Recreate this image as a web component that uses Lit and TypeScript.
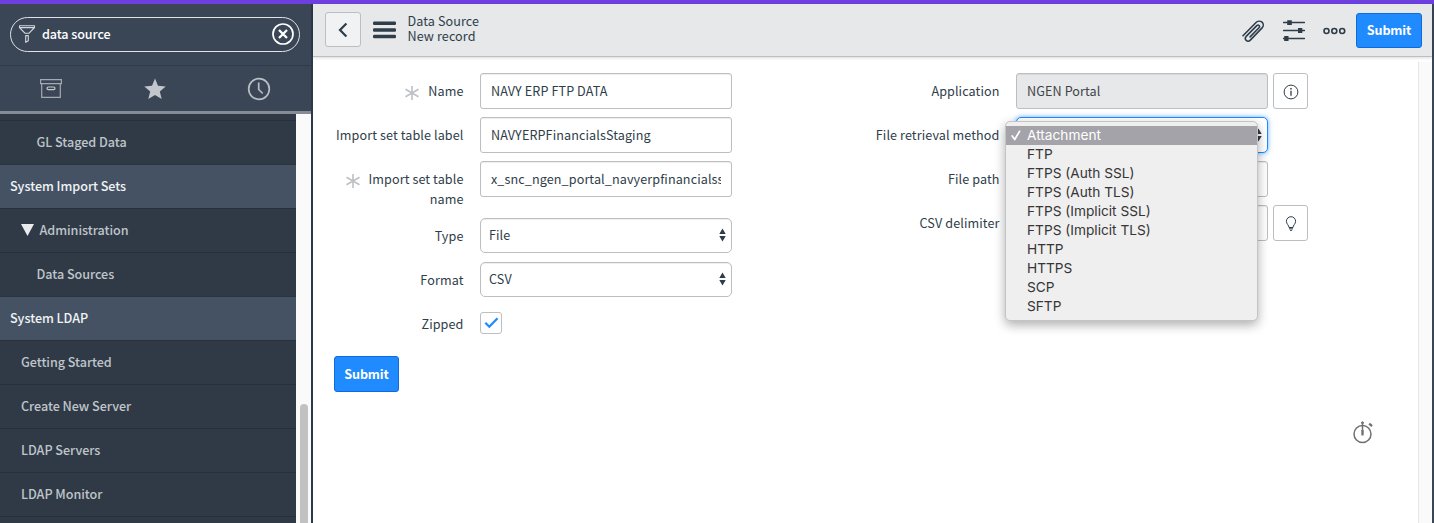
import { LitElement, html, css, svg, nothing } from "lit";
import { customElement, property } from "lit/decorators.js";
import { classMap } from "lit/directives/class-map.js";

const icons = {
  funnel: svg`<svg width="18" height="20" viewBox="0 0 18 20" fill="none" stroke="#d3d7dc" stroke-width="1.1" stroke-linejoin="round"><path d="M1.5 1.7h15v1.8l-5.6 5.8H7.1L1.5 3.5zM1.5 3.6h15M7.7 11.6h2.6v5.2L7.7 18.3z"/></svg>`,
  clear: svg`<svg width="24" height="24" viewBox="0 0 24 24" fill="none" stroke="#fff"><circle cx="12" cy="12" r="10" stroke-width="1.7"/><path d="M8 8l8 8M16 8l-8 8" stroke-width="2.3"/></svg>`,
  archive: svg`<svg width="22" height="19" viewBox="0 0 22 19" fill="none" stroke="#a3a9b2" stroke-width="1.2"><path d="M.6.7h20.8v4H.6zM1.7 4.7h18.6v13.6H1.7z"/><rect x="7" y="8" width="8" height="2.6" rx="1.3" stroke="#c5c9ce"/></svg>`,
  star: svg`<svg width="22" height="22" viewBox="0 0 22 22" fill="#c3c6cc"><path d="M11 .6l3 7.2 7.7.6-5.9 5 1.9 7.6L11 16.9 4.3 21l1.9-7.6-5.9-5 7.7-.6z"/></svg>`,
  clock: svg`<svg width="24" height="24" viewBox="0 0 24 24" fill="none" stroke="#b9bdc4" stroke-width="1.7"><circle cx="12" cy="12" r="10.3"/><path d="M11.7 5.5v7l4 4"/></svg>`,
  back: svg`<svg width="10" height="16" viewBox="0 0 10 16" fill="none" stroke="#2e3d49" stroke-width="2.2"><path d="M8.4 1.5L2 8l6.4 6.5"/></svg>`,
  menu: svg`<svg width="23" height="18" viewBox="0 0 23 18" fill="#2e3d49"><rect y=".5" width="23" height="3.5" rx="1.2"/><rect y="7.2" width="23" height="3.5" rx="1.2"/><rect y="13.7" width="23" height="3.5" rx="1.2"/></svg>`,
  clip: svg`<svg width="24" height="24" viewBox="0 0 24 24" fill="none" stroke="#2e3d49" stroke-width="1.6" stroke-linecap="round" stroke-linejoin="round"><path d="M2 16.8L14.8 3.7c1.8-1.8 4.5-1.9 6.2-.5 1.7 1.5 1.6 4 .1 5.7L9.3 21.1c-1.2 1.2-3 1.3-4.1.3-1.2-1.1-1.1-2.7 0-4L15.8 6.6c.7-.7 1.7-.7 2.3-.1.6.6.6 1.5-.1 2.3l-8.9 9.1"/></svg>`,
  sliders: svg`<svg width="22" height="22" viewBox="0 0 22 22" stroke="#2e3d49" fill="#2e3d49"><path d="M.5 2.5h21M.5 10.5h21M.5 18.5h21" stroke-width="1.5" stroke-linecap="round"/><path d="M4.2.2h4.6v4.8H4.2zM15 8.1h4.3v4.8H15zM1.2 16.1h4.3v4.8H1.2z" stroke="none"/></svg>`,
  dots: svg`<svg width="23" height="8" viewBox="0 0 23 8" fill="none" stroke="#2e3d49" stroke-width="1.6"><circle cx="3.5" cy="4" r="2.5"/><circle cx="11.3" cy="4" r="2.5"/><circle cx="19.2" cy="4" r="2.5"/></svg>`,
  required: svg`<svg width="16" height="16" viewBox="0 0 16 16" stroke="#bdc0c4" stroke-width="1.6"><path d="M8 1v14M1.5 4.2l13 7.6M1.5 11.8l13-7.6"/></svg>`,
  info: svg`<svg width="16" height="16" viewBox="0 0 16 16" fill="none" stroke="#2e3d49"><circle cx="8" cy="8" r="6.9" stroke-width="1"/><path d="M8 6.7v5" stroke-width="1.3"/><path d="M8 3.9v1.5" stroke-width="1.5"/></svg>`,
  bulb: svg`<svg width="12" height="16" viewBox="0 0 12 16" fill="none" stroke="#2e3d49" stroke-width="1"><path d="M4 11.5C4 9.3 1.4 8 1.4 5.3a4.6 4.6 0 0 1 9.2 0C10.6 8 8 9.3 8 11.5zM4 12.8h4M4.900 14.3h2.2"/></svg>`,
  spin: svg`<svg width="7" height="14" viewBox="0 0 7 14" fill="#2e3d49"><path d="M3.5.5L6.7 6H.3zM.3 8h6.4L3.5 13.5z"/></svg>`,
  check: svg`<svg width="15" height="12" viewBox="0 0 15 12" fill="none" stroke="#1f8bff" stroke-width="2.3"><path d="M1.3 5.8l4 3.9L13.5 1.2"/></svg>`,
  tick: svg`<svg width="10" height="11" viewBox="0 0 10 11" fill="none" stroke="#fff" stroke-width="1.7" stroke-linecap="round" stroke-linejoin="round"><path d="M1.2 6l2.5 3.5L8.6 1.3"/></svg>`,
  stopwatch: svg`<svg width="20" height="23" viewBox="0 0 20 23" fill="none" stroke="#707070" stroke-width="1.5"><circle cx="9.5" cy="13" r="8.5"/><path d="M9.5 2.5V13"/><path d="M9.5 9v5.5" stroke-width="2.2"/><circle cx="9.5" cy="1.8" r="1" fill="#707070" stroke-width="1"/><path d="M16.2 2.7l2.8 2.5" stroke-width="2.3"/></svg>`,
};

const face = css`
  :host {
    box-sizing: border-box;
    font-family: "Noto Sans CJK SC", "Noto Sans", sans-serif;
    font-size: 12.6px;
    letter-spacing: 0.1px;
    line-height: 20px;
    color: #2e3d49;
  }
  *, *::before { box-sizing: border-box; }
  svg { display: block; flex: none; }
`;

type NavKind = "app" | "module" | "group" | "child";
const navItems: { text: string; kind: NavKind }[] = [
  { text: "GL Staged Data", kind: "child" },
  { text: "System Import Sets", kind: "app" },
  { text: "Administration", kind: "group" },
  { text: "Data Sources", kind: "child" },
  { text: "System LDAP", kind: "app" },
  { text: "Getting Started", kind: "module" },
  { text: "Create New Server", kind: "module" },
  { text: "LDAP Servers", kind: "module" },
  { text: "LDAP Monitor", kind: "module" },
];

@customElement("nav-panel")
export class NavPanel extends LitElement {
  static styles = [face, css`
    :host {
      display: flex;
      flex-direction: column;
      width: 313px;
      flex: none;
      background: #3a4656;
      border-right: 2px solid #2c394a;
      overflow: hidden;
      letter-spacing: -0.04px;
    }
    .search { height: 62px; flex: none; padding: 13px 11px 0 10px; border-bottom: 1px solid #2f3b4a; }
    .pill {
      display: flex;
      align-items: center;
      height: 35px;
      border: 1px solid #dfe2e6;
      border-radius: 18px;
      padding: 0 4px 1px 7px;
      color: #fff;
      font-weight: 500;
      letter-spacing: -0.1px;
    }
    .query { flex: 1; padding-left: 6px; }
    .tabs {
      display: grid;
      grid-template-columns: repeat(3, 104px);
      place-items: center;
      height: 48px;
      flex: none;
      margin-left: -1px;
      border-bottom: 3px solid #868c95;
    }
    .body { display: flex; flex: 1; min-height: 0; }
    .list { flex: 1; background: #303a46; padding-top: 6px; overflow: hidden; }
    .item {
      display: flex;
      align-items: center;
      height: 44px;
      border-top: 1px solid #27313c;
      color: #bfc5ca;
      font-weight: 500;
      padding-bottom: 1px;
    }
    .app { background: #455264; color: #f1f3f5; padding-left: 10px; border-top-color: #2a3440; }
    .module { padding-left: 21px; }
    .group { padding-left: 21px; gap: 5.5px; }
    .child { padding-left: 36.5px; }
    .arrow { width: 13px; height: 12px; background: #e9ebed; clip-path: polygon(0 0, 100% 0, 50% 100%); }
    .track { width: 15px; background: #fafafa; padding: 290px 3px 0 4px; }
    .thumb { height: 160px; border-radius: 4px 4px 0 0; background: #c1c1c1; }
  `];
  render() {
    return html`
      <div class="search">
        <div class="pill">${icons.funnel}<span class="query">data source</span>${icons.clear}</div>
      </div>
      <div class="tabs">${icons.archive}${icons.star}${icons.clock}</div>
      <div class="body">
        <div class="list">
          ${navItems.map((n) => html`<div class="item ${n.kind}">${n.kind === "group" ? html`<span class="arrow"></span>` : nothing}<span>${n.text}</span></div>`)}
          <div class="item"></div>
        </div>
        <div class="track"><div class="thumb"></div></div>
      </div>`;
  }
}

@customElement("form-field")
export class FormField extends LitElement {
  @property() label = "";
  @property() value = "";
  @property() kind: "text" | "select" | "check" = "text";
  @property() action = "";
  @property({ type: Boolean }) required = false;
  @property({ type: Boolean }) locked = false;
  @property({ type: Boolean }) focused = false;
  @property({ type: Boolean }) narrow = false;

  static styles = [face, css`
    :host { display: flex; align-items: flex-start; }
    .label { display: flex; justify-content: flex-end; width: 150.5px; padding-top: 8px; text-align: right; }
    .star { padding: 4px 8px 0 0; }
    .narrow { width: 99px; margin-left: -4px; }
    .box {
      display: flex;
      align-items: center;
      position: relative;
      width: 252px;
      height: 36px;
      margin-left: 16.5px;
      padding: 0 10px;
      border: 1px solid #bcbec2;
      border-radius: 3px;
      background: #fff;
      box-shadow: inset 0 1px 1px rgba(0, 0, 0, 0.07);
    }
    .value { flex: 1; overflow: hidden; white-space: nowrap; }
    .select { height: 35px; padding: 0 5px 1px 8px; border-radius: 5px; }
    .locked { background: #e6e8ea; color: #3f4448; }
    .focused { height: 36px; border-color: #1f8bff; box-shadow: 0 0 5px rgba(31, 139, 255, 0.7); }
    .check { width: 22px; height: 22px; padding: 0; justify-content: center; margin-top: 6px; box-shadow: none; }
    .action {
      display: flex;
      align-items: center;
      justify-content: center;
      width: 35px;
      height: 36px;
      margin-left: 5px;
      padding-top: 2px;
      border: 1px solid #bcbec2;
      border-radius: 3px;
    }
  `];
  render() {
    const box = {
      box: true,
      select: this.kind === "select",
      check: this.kind === "check",
      locked: this.locked,
      focused: this.focused,
    };
    return html`
      <div class="label">
        ${this.required ? html`<span class="star">${icons.required}</span>` : nothing}
        <span class=${classMap({ narrow: this.narrow })}>${this.label}</span>
      </div>
      <div class=${classMap(box)}>
        ${this.kind === "check" ? icons.check : html`<span class="value">${this.value}</span>`}
        ${this.kind === "select" ? icons.spin : nothing}
        <slot></slot>
      </div>
      ${this.action ? html`<div class="action">${this.action === "info" ? icons.info : icons.bulb}</div>` : nothing}`;
  }
}

const methods = ["Attachment", "FTP", "FTPS (Auth SSL)", "FTPS (Auth TLS)", "FTPS (Implicit SSL)", "FTPS (Implicit TLS)", "HTTP", "HTTPS", "SCP", "SFTP"];

@customElement("option-menu")
export class OptionMenu extends LitElement {
  static styles = [face, css`
    :host {
      position: absolute;
      top: 3px;
      left: -12px;
      z-index: 2;
      width: 253px;
      height: 200px;
      padding-top: 4px;
      border-radius: 5px;
      background: #efefef;
      border: 1px solid #c4c4c4;
      box-shadow: 0 4px 11px rgba(0, 0, 0, 0.32);
      font-family: Inter, "Liberation Sans", sans-serif;
      font-size: 13.7px;
      letter-spacing: 0;
      line-height: 19px;
      color: #363636;
    }
    .option { display: flex; height: 19px; padding-left: 21px; }
    .on { background: #a4a3a9; color: #fff; padding-left: 5px; align-items: center; gap: 6px; }
  `];
  render() {
    return methods.map((m, i) => html`<div class=${classMap({ option: true, on: i === 0 })}>${i === 0 ? icons.tick : nothing}<span>${m}</span></div>`);
  }
}

@customElement("app-root")
export class AppRoot extends LitElement {
  static styles = [face, css`
    :host {
      display: flex;
      flex-direction: column;
      position: relative;
      width: 1434px;
      height: 523px;
      overflow: hidden;
      background: #fff;
    }
    .accent { height: 4px; flex: none; background: #6e3fe0; }
    .page { display: flex; flex: 1; min-height: 0; border-right: 2px solid #3a4656; }
    .main { display: flex; flex-direction: column; flex: 1; min-width: 0; }
    .head {
      display: flex;
      align-items: center;
      height: 53px;
      flex: none;
      padding: 0 10px 0 12px;
      background: #e6e8ea;
      border-bottom: 1px solid #bcbec2;
      box-shadow: 0 1px 3px rgba(0, 0, 0, 0.15);
    }
    .back {
      display: flex;
      align-items: center;
      justify-content: center;
      width: 36px;
      height: 35px;
      margin: 0 12px 1px 0;
      padding-top: 1px;
      background: #f1f2f3;
      border: 1px solid #bcbec2;
      border-radius: 3px;
    }
    .title { flex: 1; padding: 0 0 5px 11.5px; line-height: 15px; }
    .tools { display: flex; align-items: center; gap: 18px; padding: 1px 10px 0 0; }
    .submit {
      display: flex;
      align-items: center;
      justify-content: center;
      border: 1px solid #0f6bdc;
      border-radius: 3px;
      background: #1f8bff;
      color: #fff;
      font-weight: 700;
      letter-spacing: -0.15px;
      width: 66px;
      height: 35px;
      padding-bottom: 1px;
    }
    .foot { width: 65px; height: 36px; margin: 22px 0 0 21px; }
    .content { display: flex; flex: 1; min-height: 0; padding-top: 5px; }
    .sheet { flex: 1; padding-top: 11px; border-right: 1px solid #e6e6e6; }
    .gutter { width: 13px; background: #fafafa; }
    .columns { display: flex; gap: 117px; }
    .col { display: flex; flex-direction: column; gap: 8px; }
    .after { margin-top: 1px; }
    .timer { position: absolute; left: 1353px; top: 421px; }
  `];
  render() {
    return html`
      <div class="accent"></div>
      <div class="page">
        <nav-panel></nav-panel>
        <div class="main">
          <div class="head">
            <div class="back">${icons.back}</div>
            ${icons.menu}
            <div class="title"><div>Data Source</div><div>New record</div></div>
            <div class="tools">${icons.clip}${icons.sliders}${icons.dots}</div>
            <div class="submit">Submit</div>
          </div>
          <div class="content">
            <div class="sheet">
              <div class="columns">
                <div class="col">
                  <form-field label="Name" value="NAVY ERP FTP DATA" required></form-field>
                  <form-field label="Import set table label" value="NAVYERPFinancialsStaging"></form-field>
                  <form-field label="Import set table name" value="x_snc_ngen_portal_navyerpfinancialsstaging" required narrow></form-field>
                  <form-field class="after" kind="select" label="Type" value="File"></form-field>
                  <form-field class="after" kind="select" label="Format" value="CSV"></form-field>
                  <form-field class="after" kind="check" label="Zipped"></form-field>
                </div>
                <div class="col">
                  <form-field label="Application" value="NGEN Portal" locked action="info"></form-field>
                  <form-field kind="select" label="File retrieval method" focused><option-menu></option-menu></form-field>
                  <form-field label="File path"></form-field>
                  <form-field label="CSV delimiter" action="bulb"></form-field>
                </div>
              </div>
              <div class="submit foot">Submit</div>
            </div>
            <div class="gutter"></div>
          </div>
        </div>
      </div>
      <div class="timer">${icons.stopwatch}</div>`;
  }
}
